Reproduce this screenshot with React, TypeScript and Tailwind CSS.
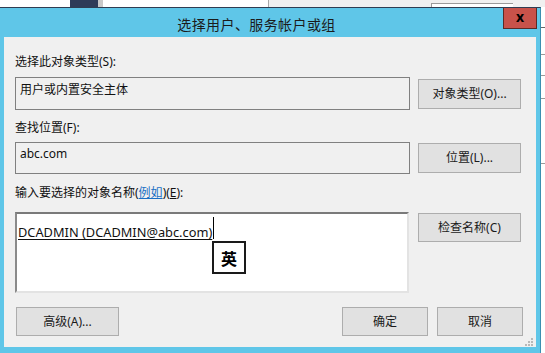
import React from "react";

const font = { fontFamily: '"Noto Sans", "Noto Sans CJK SC", sans-serif' };
const cjk = { fontFamily: '"Noto Sans CJK SC", sans-serif' };

function Btn({ children, className = "" }: { children: React.ReactNode; className?: string }) {
  return (
    <div
      className={
        "flex items-center justify-center border border-[#adadad] bg-[#e1e1e1] text-[12px] leading-[16px] text-[#1a1a1a] " +
        className
      }
    >
      {children}
    </div>
  );
}

export default function App() {
  return (
    <div className="flex h-[353px] w-[545px] flex-col overflow-hidden bg-white" style={font}>
      {/* background behind the dialog */}
      <div className="flex h-[7px] shrink-0 overflow-hidden">
        <div className="w-[70px] bg-white" />
        <div className="w-[28px] bg-[#2e3b58]" />
        <div className="w-[5px] bg-[#c9c9c9]" />
        <div className="w-[165px] bg-white" />
        <div className="w-px bg-[#a8a8a8]" />
        <div className="flex h-[7px] flex-1 bg-[#f0f0f0]">
          <div className="ml-[162px] mt-[3px] h-[10px] w-[82px] border-l border-t border-[#9a9a9a] bg-white" />
        </div>
      </div>
      <div className="flex flex-1">
        {/* dialog */}
        <div className="flex w-[541px] flex-col border-t border-r border-t-[#2f3d52] border-r-[#3a8fb0] bg-[#5fc6e8]">
          {/* title bar */}
          <div className="flex h-[29px] shrink-0 items-start">
            <div
              className="flex flex-1 justify-center pl-[10px] pt-[7px] text-[14px] leading-[18px] tracking-[0.4px] text-[#1b1b1b]"
              style={cjk}
            >
              选择用户、服务帐户或组
            </div>
            <div className="mr-[3px] flex h-[21px] w-[34px] items-center justify-center border border-t-0 border-[#5c2a26] bg-[#c8524a] pb-[2px] text-[14px] font-bold leading-[14px] text-black">
              x
            </div>
          </div>
          {/* client */}
          <div className="mx-[4px] mb-[6px] flex flex-1 flex-col bg-[#f0f0f0] pl-[11px] pr-[13px] text-[12px] text-[#111]">
            <div className="pt-[17px] leading-[16px]">选择此对象类型(S):</div>
            <div className="mt-[7px] flex items-start gap-[8px]">
              <div className="h-[33px] w-[395px] border border-[#808080] px-[4px] pt-[4px] leading-[16px]">用户或内置安全主体</div>
              <Btn className="mt-[2px] h-[30px] w-[103px]">对象类型(O)...</Btn>
            </div>
            <div className="mt-[10px] leading-[16px]">查找位置(F):</div>
            <div className="mt-[6px] flex items-start gap-[8px]">
              <div className="h-[32px] w-[395px] border border-[#808080] px-[4px] pt-[3px] leading-[16px]">abc.com</div>
              <Btn className="mt-[1px] h-[30px] w-[103px]">位置(L)...</Btn>
            </div>
            <div className="mt-[11px] leading-[16px]">
              输入要选择的对象名称(<span className="text-[#1a6fc4] underline">例如</span>)(<span className="underline">E</span>):
            </div>
            <div className="mt-[11px] flex items-start gap-[9px]">
              <div className="relative h-[81px] w-[394px] border-2 border-b-[#e3e3e3] border-l-[#8a8a8a] border-r-[#e3e3e3] border-t-[#7a7a7a] bg-white pl-[1px] pt-[10px]">
                <div className="flex items-start">
                  <span className="text-[12.8px] leading-[16px] underline underline-offset-2">DCADMIN (DCADMIN@abc.com)</span>
                  <span className="-mt-[7px] ml-[1px] h-[22px] w-px bg-black" />
                </div>
                <div
                  className="absolute left-[195px] top-[27px] flex h-[33px] w-[34px] items-center justify-center border-2 border-[#1a1a1a] bg-white text-[16px] font-bold leading-[16px] text-black"
                  style={cjk}
                >
                  英
                </div>
              </div>
              <Btn className="mt-[1px] h-[29px] w-[103px]">检查名称(C)</Btn>
            </div>
            <div className="mt-[14px] flex items-start">
              <Btn className="ml-[1px] h-[29px] w-[103px]">高级(A)...</Btn>
              <div className="flex-1" />
              <Btn className="h-[29px] w-[86px]">确定</Btn>
              <Btn className="ml-[9px] h-[29px] w-[86px]">取消</Btn>
            </div>
            <div className="mt-[1px] flex justify-end">
              <svg width="10" height="9" viewBox="0 0 10 9" className="-mr-[11px]">
                <g fill="#b8b8b8">
                  <rect x="7" y="1" width="2" height="2" />
                  <rect x="4" y="4" width="2" height="2" />
                  <rect x="7" y="4" width="2" height="2" />
                  <rect x="1" y="7" width="2" height="2" />
                  <rect x="4" y="7" width="2" height="2" />
                  <rect x="7" y="7" width="2" height="2" />
                </g>
              </svg>
            </div>
          </div>
        </div>
        {/* right strip of the background */}
        <div className="flex w-[4px] flex-col bg-white">
          <div className="mt-[20px] h-px bg-[#666]" />
          <div className="mt-[26px] h-px bg-[#999]" />
          <div className="mt-[20px] h-px bg-[#999]" />
          <div className="mt-[22px] h-px bg-[#999]" />
          <div className="mt-[64px] h-px bg-[#999]" />
        </div>
      </div>
    </div>
  );
}
